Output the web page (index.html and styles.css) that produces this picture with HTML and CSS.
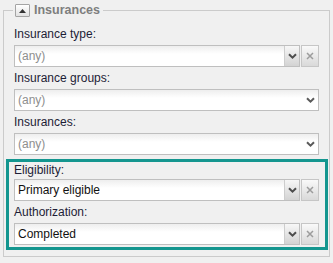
FILE: index.html
```html
<!DOCTYPE html>
<html>
<head>
<meta charset="utf-8">
<link rel="stylesheet" href="styles.css">
</head>
<body>
<fieldset class="panel">
  <legend class="legend"><span class="toggle"><svg width="7" height="4" viewBox="0 0 7 4"><path d="M0 4 L3.5 0 L7 4Z" fill="#333"/></svg></span><span class="legend-text">Insurances</span></legend>

  <div class="field">
    <label class="label">Insurance type:</label>
    <div class="row">
      <div class="combo">
        <span class="value placeholder">(any)</span>
        <span class="drop-btn"><svg width="9" height="6" viewBox="0 0 9 6"><path d="M1 1.2 L4.5 4.6 L8 1.2" fill="none" stroke="#4d4d4d" stroke-width="2"/></svg></span>
      </div>
      <span class="clear-btn"><svg width="8" height="8" viewBox="0 0 8 8"><path d="M1 1 L7 7 M7 1 L1 7" stroke="#9c9c9c" stroke-width="1.5"/></svg></span>
    </div>
  </div>

  <div class="field">
    <label class="label">Insurance groups:</label>
    <div class="row">
      <div class="combo">
        <span class="value placeholder">(any)</span>
        <span class="drop-plain"><svg width="9" height="6" viewBox="0 0 9 6"><path d="M1 1.2 L4.5 4.6 L8 1.2" fill="none" stroke="#5a5a5a" stroke-width="2"/></svg></span>
      </div>
    </div>
  </div>

  <div class="field">
    <label class="label">Insurances:</label>
    <div class="row">
      <div class="combo">
        <span class="value placeholder">(any)</span>
        <span class="drop-plain"><svg width="9" height="6" viewBox="0 0 9 6"><path d="M1 1.2 L4.5 4.6 L8 1.2" fill="none" stroke="#5a5a5a" stroke-width="2"/></svg></span>
      </div>
    </div>
  </div>

  <div class="highlight">
    <div class="field">
      <label class="label label-first">Eligibility:</label>
      <div class="row">
        <div class="combo">
          <span class="value">Primary eligible</span>
          <span class="drop-btn"><svg width="9" height="6" viewBox="0 0 9 6"><path d="M1 1.2 L4.5 4.6 L8 1.2" fill="none" stroke="#4d4d4d" stroke-width="2"/></svg></span>
        </div>
        <span class="clear-btn"><svg width="8" height="8" viewBox="0 0 8 8"><path d="M1 1 L7 7 M7 1 L1 7" stroke="#9c9c9c" stroke-width="1.5"/></svg></span>
      </div>
    </div>
    <div class="field">
      <label class="label">Authorization:</label>
      <div class="row">
        <div class="combo">
          <span class="value">Completed</span>
          <span class="drop-btn"><svg width="9" height="6" viewBox="0 0 9 6"><path d="M1 1.2 L4.5 4.6 L8 1.2" fill="none" stroke="#4d4d4d" stroke-width="2"/></svg></span>
        </div>
        <span class="clear-btn"><svg width="8" height="8" viewBox="0 0 8 8"><path d="M1 1 L7 7 M7 1 L1 7" stroke="#9c9c9c" stroke-width="1.5"/></svg></span>
      </div>
    </div>
  </div>
</fieldset>
</body>
</html>
```
FILE: styles.css
```css
html, body {
  margin: 0;
  background: #f0f0f0;
}
body {
  font-family: "Liberation Sans", Arial, sans-serif;
  font-size: 12px;
}
.panel {
  margin: 3px 3px 0;
  padding: 6px 10px 6px;
  border: 1px solid #cbcbcb;
  min-width: 0;
}
.legend {
  padding: 0 3px 0 2px;
  margin-left: -1px;
  height: 14px;
  line-height: 14px;
}
.toggle {
  display: inline-flex;
  align-items: center;
  justify-content: center;
  box-sizing: border-box;
  width: 15px;
  height: 13px;
  margin-top: 1px;
  border: 1px solid #a4a4a4;
  border-radius: 1px;
  background: linear-gradient(#ffffff, #e2e2e2);
  vertical-align: top;
}
.toggle svg {
  display: block;
}
.legend-text {
  display: inline-block;
  vertical-align: top;
  margin-left: 4px;
  font-weight: bold;
  font-size: 12.5px;
  line-height: 14px;
  color: #7e7e7e;
}
.label {
  display: block;
  padding: 3px 0;
  line-height: 16px;
  color: #1d1d36;
}
.label-first {
  padding: 0 0 1px;
}
.row {
  display: flex;
  gap: 1px;
  height: 22px;
}
.combo {
  flex: 1;
  display: flex;
  box-sizing: border-box;
  border: 1px solid #bfbfbf;
  background: linear-gradient(#eeeeee, #ffffff 40%);
}
.value {
  flex: 1;
  padding-left: 3px;
  line-height: 20px;
  color: #111;
}
.placeholder {
  color: #8e8e8e;
}
.drop-btn {
  width: 15px;
  box-sizing: border-box;
  border-left: 1px solid #cdcdcd;
  background: linear-gradient(#f7f7f7, #d3d3d3);
  display: flex;
  align-items: center;
  justify-content: center;
}
.drop-plain {
  width: 15px;
  display: flex;
  align-items: center;
  justify-content: center;
}
.drop-btn svg, .drop-plain svg, .clear-btn svg {
  display: block;
}
.clear-btn {
  width: 18px;
  box-sizing: border-box;
  border: 1px solid #c6c6c6;
  background: linear-gradient(#f9f9f9, #d9d9d9);
  display: flex;
  align-items: center;
  justify-content: center;
}
.highlight {
  margin: 4px -9px 0 -8px;
  border: 3px solid #14968f;
  padding: 0 6px 2px 5px;
}
```
